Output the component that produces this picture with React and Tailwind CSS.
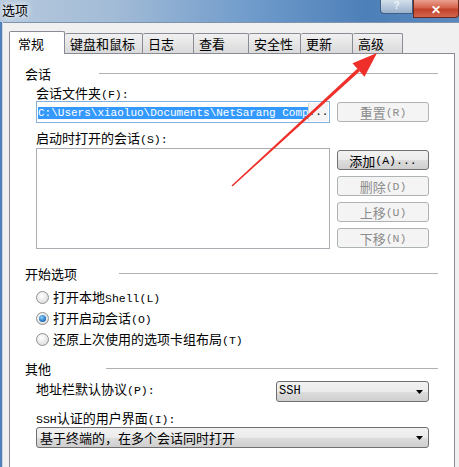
import React from 'react'

const M = ({ children, className = '' }) => (
  <span className={"font-['Liberation_Mono',monospace] text-[11.5px] " + className}>{children}</span>
)

const Btn = ({ children, disabled }) => (
  <div
    className={
      disabled
        ? 'flex h-[20px] w-[92px] items-center justify-center rounded-[3px] border border-[#adb2b5] bg-[#f4f4f4] text-[#8c8c8c]'
        : 'flex h-[20px] w-[92px] items-center justify-center rounded-[3px] border border-[#707070] bg-[linear-gradient(#f2f2f2_0%,#ebebeb_50%,#dddddd_51%,#cfcfcf_100%)]'
    }
  >
    {children}
  </div>
)

const Header = ({ label, lineClass }) => (
  <div className="flex h-[15px] items-center justify-between">
    <span>{label}</span>
    <div className={'h-px bg-[#b0b0b0] ' + lineClass} />
  </div>
)

const Radio = ({ checked, children }) => (
  <div className="flex h-[21px] items-center gap-[4px]">
    <div className="flex h-[13px] w-[13px] items-center justify-center rounded-full border border-[#8e8f8f] bg-[radial-gradient(circle_at_40%_35%,#ffffff_0%,#e6e6e6_60%,#cfcfcf_100%)]">
      {checked && (
        <div className="h-[7px] w-[7px] rounded-full bg-[radial-gradient(circle_at_40%_35%,#8fd0ff_0%,#2c7fc7_55%,#1c4f86_100%)]" />
      )}
    </div>
    <span>{children}</span>
  </div>
)

const Arrow = () => (
  <svg width="7" height="4" viewBox="0 0 7 4">
    <path d="M0 0 H7 L3.5 4 Z" fill="#000" />
  </svg>
)

const tabs = [
  { label: '常规', cls: 'w-[56px]', active: true },
  { label: '键盘和鼠标', cls: 'w-[78px]' },
  { label: '日志', cls: 'w-[51px]' },
  { label: '查看', cls: 'w-[55px]' },
  { label: '安全性', cls: 'w-[52px]' },
  { label: '更新', cls: 'w-[52px]' },
  { label: '高级', cls: 'w-[50px]' },
]

export default function App() {
  return (
    <div className="relative flex h-[467px] w-[459px] flex-col overflow-hidden bg-[#f0f0f0] font-['Noto_Sans_CJK_SC',sans-serif] text-[13px] leading-[15px] text-black">
      {/* title bar */}
      <div className="flex h-[22px] shrink-0 items-start justify-between bg-[linear-gradient(90deg,#b6c9dd_0%,#a2bbd6_25%,#6f9bcb_55%,#4d7fb8_80%,#5a89bf_100%)]">
        <span className="pl-[2px] pt-[2px] [text-shadow:0_0_5px_#ffffff,0_0_8px_#ffffff]">选项</span>
        <div className="flex items-start">
          <div className="flex h-[14px] w-[33px] items-start justify-center rounded-bl-[4px] border border-t-0 border-[#3f5f84] bg-[linear-gradient(#d3dfeb,#9bb2cc)] font-['Liberation_Sans',sans-serif] text-[10px] font-bold leading-[12px] text-[#eef3f8]">
            ?
          </div>
          <div className="flex h-[18px] w-[46px] items-center justify-center rounded-br-[4px] border border-t-0 border-[#6b2a20] bg-[linear-gradient(#e9a08f_0%,#d4634c_45%,#c1422b_55%,#d3654e_100%)] text-[12px] font-bold leading-[14px] text-white">
            ✕
          </div>
        </div>
      </div>

      {/* body */}
      <div className="flex flex-1">
        <div className="w-[2px] bg-[#4f80b8]" />
        <div className="w-px bg-[#c8d6e5]" />
        <div className="flex-1 border-t border-[#7f93ab] pl-[6px] pt-[8px]">
          {/* tabs */}
          <div className="relative z-10 -mb-px flex h-[23px] items-end">
            {tabs.map((t) =>
              t.active ? (
                <div
                  key={t.label}
                  className={'flex h-[23px] items-center rounded-t-[2px] border border-b-0 border-[#898c95] bg-white pl-[8px] ' + t.cls}
                >
                  {t.label}
                </div>
              ) : (
                <div
                  key={t.label}
                  className={'mb-px flex h-[20px] items-center rounded-t-[2px] border-t border-r border-[#898c95] bg-[linear-gradient(#f1f1f1,#dadada)] pl-[5px] ' + t.cls}
                >
                  {t.label}
                </div>
              )
            )}
          </div>

          {/* panel */}
          <div className="h-[420px] w-[446px] border border-[#898c95] bg-white pl-[15px] pr-[16px]">
            <div className="mt-[12px]">
              <Header label="会话" lineClass="w-[339px]" />
            </div>
            <div className="ml-[11px] mr-[9px]">
              <div className="mt-[4px] h-[15px]">
                会话文件夹<M>(F):</M>
              </div>
              <div className="mt-px flex h-[22px] items-center justify-between">
                <div className="flex h-[22px] w-[294px] items-center border border-[#86b0dc] bg-white pl-px pr-px">
                  <div className="flex-1 overflow-hidden whitespace-nowrap">
                    <span className="bg-[#3399ff] font-['Liberation_Mono',monospace] text-[11px] leading-[16px] text-white">
                      C:\Users\xiaoluo\Documents\NetSarang Comp
                    </span>
                  </div>
                  <div className="flex h-[18px] w-[20px] items-center justify-center border-l border-[#d6d6d6] bg-[#f4f4f4] font-['Liberation_Mono',monospace] text-[11px]">
                    ...
                  </div>
                </div>
                <Btn disabled>
                  重置<M>(R)</M>
                </Btn>
              </div>
              <div className="mt-[7px] h-[15px]">
                启动时打开的会话<M>(S):</M>
              </div>
              <div className="mt-[3px] flex justify-between">
                <div className="h-[101px] w-[294px] border border-[#abadb3] bg-white" />
                <div className="flex flex-col gap-[6px] pt-[2px]">
                  <Btn>
                    添加<M>(A)...</M>
                  </Btn>
                  <Btn disabled>
                    删除<M>(D)</M>
                  </Btn>
                  <Btn disabled>
                    上移<M>(U)</M>
                  </Btn>
                  <Btn disabled>
                    下移<M>(N)</M>
                  </Btn>
                </div>
              </div>
            </div>

            <div className="mt-[17px]">
              <Header label="开始选项" lineClass="w-[319px]" />
            </div>
            <div className="ml-[11px] mr-[9px] mt-[6px]">
              <Radio>
                打开本地<M>Shell(L)</M>
              </Radio>
              <Radio checked>
                打开启动会话<M>(O)</M>
              </Radio>
              <Radio>
                还原上次使用的选项卡组布局<M>(T)</M>
              </Radio>
            </div>

            <div className="mt-[11px]">
              <Header label="其他" lineClass="w-[332px]" />
            </div>
            <div className="ml-[11px] mr-[9px]">
              <div className="mt-[5px] flex h-[21px] items-start justify-between">
                <span className="h-[15px]">
                  地址栏默认协议<M>(P):</M>
                </span>
                <div className="flex h-[21px] w-[153px] items-center justify-between rounded-[3px] border border-[#707070] bg-[linear-gradient(#f2f2f2_0%,#ebebeb_50%,#dddddd_51%,#cfcfcf_100%)] pl-[2px] pr-[5px]">
                  <span className="font-['Liberation_Mono',monospace] text-[12px]">SSH</span>
                  <Arrow />
                </div>
              </div>
              <div className="mt-[8px] h-[15px]">
                <M>SSH</M>认证的用户界面<M>(I):</M>
              </div>
              <div className="mt-[2px] flex h-[21px] items-center justify-between rounded-[3px] border border-[#707070] bg-[linear-gradient(#f2f2f2_0%,#ebebeb_50%,#dddddd_51%,#cfcfcf_100%)] pl-[3px] pr-[5px]">
                <span>基于终端的，在多个会话同时打开</span>
                <Arrow />
              </div>
            </div>
          </div>
        </div>
      </div>

      {/* red annotation arrow */}
      <svg className="pointer-events-none absolute left-0 top-0" width="459" height="467" viewBox="0 0 459 467">
        <polygon points="232.5,186.6 231.5,185.4 357.3,68.7 359.7,71.3" fill="#ee2f2a" />
        <polygon points="377,53 364.5,76.7 352.5,63.3" fill="#ee2f2a" />
      </svg>
    </div>
  )
}
